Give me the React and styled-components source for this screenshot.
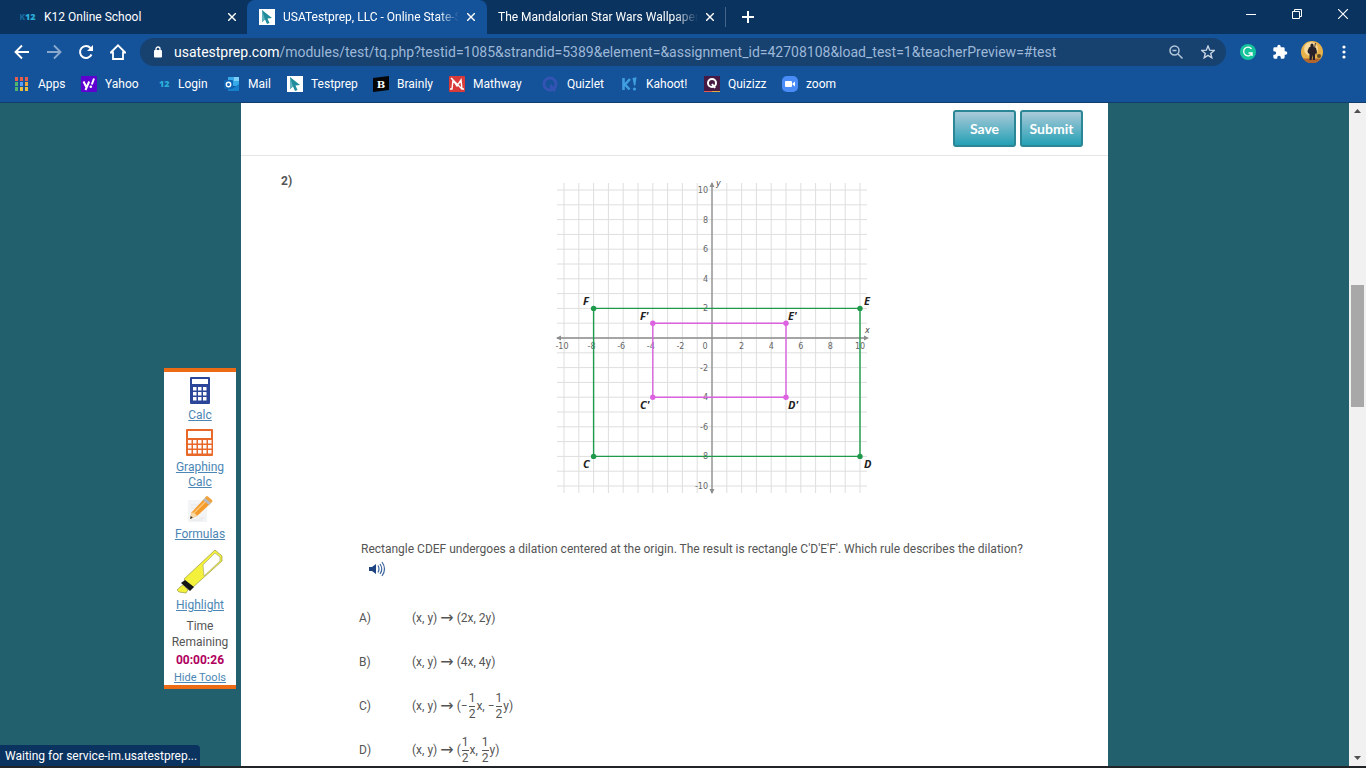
import React from "react";
import styled, { createGlobalStyle, css } from "styled-components";

const ui = 'Roboto, "Open Sans", sans-serif';

const Global = createGlobalStyle`
  *, *::before, *::after { box-sizing: border-box; }
  body { margin: 0; background: #23606d; font-family: ${ui}; }
  button { border: 0; background: none; padding: 0; font: inherit; color: inherit; }
  a { color: inherit; text-decoration: none; }
  svg { display: block; flex: none; }
`;

const Screen = styled.div`
  height: 100vh;
  display: flex;
  flex-direction: column;
  overflow: hidden;
  border-bottom: 2px solid #222528;
`;

/* browser chrome */
const TabStrip = styled.div`
  display: flex;
  height: 34px;
  background: #0b335f;
  color: #fff;
  font-size: 12px;
`;
const Tab = styled.div`
  display: flex;
  align-items: center;
  gap: 8px;
  width: 240px;
  height: 34px;
  padding: 0 9px 0 11px;
  border-radius: 8px 8px 0 0;
  ${(p) => p.$first && css`width: 247px; padding: 0 7px 0 20px;`}
  ${(p) => p.$active && css`background: #14529a; padding: 0 8px 0 12px;`}
`;
const TabTitle = styled.span`
  flex: 1;
  min-width: 0;
  overflow: hidden;
  white-space: nowrap;
  line-height: 18px;
  ${(p) => p.$fade && css`margin-right: -4px; mask-image: linear-gradient(to right, #000 88%, transparent);`}
`;
const IconButton = styled.button`
  display: flex;
  justify-content: center;
  align-items: center;
  width: ${(p) => p.$w || 16}px;
  height: ${(p) => p.$h || 16}px;
  flex: none;
  opacity: ${(p) => (p.$dim ? 0.5 : 1)};
`;
const Divider = styled.span`
  width: 1px;
  height: 20px;
  margin: 7px 11px 0 -2px;
  background: #44658a;
`;
const NewTab = styled(IconButton)`
  align-self: center;
`;
const WindowButtons = styled.div`
  display: flex;
  margin-left: auto;
  height: 28px;
`;

const Toolbar = styled.div`
  display: flex;
  align-items: center;
  gap: 16px;
  height: 36px;
  padding: 0 14px;
  background: #14529a;
  color: #fff;
`;
const AddressBar = styled.div`
  flex: 1;
  min-width: 0;
  display: flex;
  align-items: center;
  gap: 12px;
  height: 28px;
  margin: 0 -2px;
  padding: 0 8px 0 14px;
  border-radius: 14px;
  background: #17416f;
`;
const Address = styled.div`
  flex: 1;
  min-width: 0;
  overflow: hidden;
  white-space: nowrap;
  font-size: 14px;
  line-height: 20px;
  color: #9db8d8;
  b { font-weight: 400; color: #fff; }
`;

const Bookmarks = styled.nav`
  display: flex;
  height: 33px;
  padding: 0 14px 5px;
  background: #14529a;
  border-bottom: 1px solid #123c6c;
  color: #fff;
  font-size: 12px;
`;
const Bookmark = styled.a`
  display: flex;
  align-items: center;
  gap: 8px;
  width: ${(p) => p.$w}px;
  flex: none;
  white-space: nowrap;
`;

/* page */
const Viewport = styled.div`
  flex: 1;
  min-height: 0;
  display: flex;
`;
const Page = styled.div`
  flex: 1;
  min-width: 0;
  display: grid;
  grid-template-columns: 1fr minmax(0, 867px) 1fr;
  overflow: hidden;
  color: #555;
`;
const Gutter = styled.div`
  display: flex;
  justify-content: flex-end;
  align-items: flex-start;
  padding: 265px 5px 0 0;
`;
const Tools = styled.aside`
  display: flex;
  flex-direction: column;
  align-items: center;
  width: 72px;
  height: 321px;
  border-top: 4px solid #ec6b14;
  border-bottom: 4px solid #ec6b14;
  background: #fff;
  font-size: 12px;
  line-height: 16px;
  text-align: center;
`;
const Tool = styled.a`
  display: flex;
  flex-direction: column;
  align-items: center;
  gap: 4px;
  padding-top: ${(p) => p.$pad}px;
  line-height: 15px;
  color: #4b86b4;
  text-decoration: underline;
`;
const Timer = styled.div`
  padding-top: 5px;
  strong { display: block; line-height: 20px; color: #b0005e; }
`;
const HideTools = styled.a`
  font-size: 11px;
  color: #4b86b4;
  text-decoration: underline;
`;

const Sheet = styled.main`
  background: #fff;
  overflow: hidden;
`;
const Actions = styled.div`
  display: flex;
  justify-content: flex-end;
  height: 53px;
  padding: 7px 25px 0 118px;
  border-bottom: 1px solid #e3e7e8;
`;
const ActionGroup = styled.div`
  display: flex;
  gap: 4px;
`;
const ActionButton = styled.button`
  width: 63px;
  height: 37px;
  border: 2px solid #2b8795;
  border-radius: 3px;
  background: linear-gradient(#a9cad9, #25a0b5);
  color: #fff;
  font-family: Lato, sans-serif;
  font-size: 14px;
  font-weight: 700;
`;
const Question = styled.section`
  display: grid;
  grid-template-columns: 80px minmax(0, 1fr);
  padding: 14px 0 0 40px;
`;
const Number = styled.div`
  font-size: 12px;
  font-weight: 700;
  line-height: 22px;
`;
const Figure = styled.figure`
  margin: 6px 0 0 191px;
`;
const Prompt = styled.p`
  margin: 41px 0 0;
  font-size: 12px;
  line-height: 20px;
  white-space: nowrap;
`;
const Listen = styled.button`
  display: block;
  margin: 2px 0 0 7px;
`;
const Answers = styled.ol`
  list-style: none;
  margin: 19px 0 0;
  padding: 0;
`;
const Answer = styled.li`
  display: grid;
  grid-template-columns: 53px 1fr;
  align-items: center;
  height: 44px;
  margin-left: -2px;
  font-size: 12px;
  line-height: 16px;
`;
const Rule = styled.span`
  display: flex;
  align-items: center;
  white-space: pre;
`;
const To = styled.span`
  padding: 0 3px;
  font-family: "DejaVu Sans", sans-serif;
  font-size: 16px;
`;
const Fraction = styled.span`
  display: inline-flex;
  flex-direction: column;
  align-items: center;
  margin: 0 1px;
  line-height: 15px;
  span:first-child { border-bottom: 1px solid #555; }
`;

const ScrollBar = styled.div`
  display: flex;
  flex-direction: column;
  align-items: center;
  justify-content: space-between;
  width: 17px;
  padding: 6px 0;
  background: #f1f1f1;
`;
const ScrollTrack = styled.div`
  flex: 1;
  display: flex;
  flex-direction: column;
  width: 13px;
  &::before { content: ""; flex: 172; }
  &::after { content: ""; flex: 349; }
`;
const ScrollThumb = styled.div`
  flex: 122;
  background: #a8a8a8;
`;
const Status = styled.div`
  position: fixed;
  left: 0;
  bottom: 2px;
  width: 200px;
  height: 21px;
  padding-left: 5px;
  border-radius: 0 4px 0 0;
  background: #0b335f;
  color: #fff;
  font-size: 12px;
  line-height: 22px;
  white-space: nowrap;
`;

/* icons */
const Cross = ({ size = 8 }) => (
  <svg width={size} height={size} viewBox="0 0 8 8" stroke="currentColor" strokeWidth={size > 8 ? 0.9 : 1.4}><path d="M0 0 8 8M8 0 0 8" /></svg>
);
const K12 = ({ short }) => (
  <svg width="16" height="16" viewBox="0 0 16 16" fontFamily="Open Sans" fontWeight="800" fontSize="9">
    {!short && <text x="-1" y="11" fill="#17659b">K</text>}
    <text x="5" y="11" fill="#2badd8">12</text>
  </svg>
);
const Pointer = () => (
  <svg width="16" height="16" viewBox="0 0 16 16"><path fill="#fff" d="M0 0h16v16H0z" /><path fill="#218d9c" d="M3 1v12l3-2.500 2 4.500 2.500-1-2-4.500 4.500-.5z" /><path fill="#5fb3be" d="M3 1l3 9.500-3 2.500z" /></svg>
);
const AppsIcon = () => (
  <svg width="16" height="16" viewBox="0 0 16 16">
    {["#e8604c", "#e8604c", "#e8604c", "#4fb56f", "#5c9cf5", "#e9a93e", "#4fb56f", "#e9c03e", "#e9c03e"].map((c, i) => (
      <rect key={i} x={1 + (i % 3) * 5} y={1 + Math.floor(i / 3) * 5} width="3" height="4" fill={c} />
    ))}
  </svg>
);
const Yahoo = () => (
  <svg width="16" height="16" viewBox="0 0 16 16"><rect width="16" height="16" rx="1" fill="#5f01d1" /><path d="m2.500 5.500 2.800 5.500M8.200 5.500 4.500 14M13 2.500l-2.200 6" fill="none" stroke="#fff" strokeWidth="2" /><circle cx="9.800" cy="10.800" r="1.300" fill="#fff" /></svg>
);
const Brainly = () => (
  <svg width="16" height="16" viewBox="0 0 16 16"><path fill="#050505" d="M0 2 16 0v14L0 16z" /><text x="8" y="12" textAnchor="middle" fill="#fff" fontFamily="DejaVu Serif" fontWeight="700" fontSize="10">B</text></svg>
);
const Kahoot = () => (
  <svg width="17" height="16" viewBox="0 0 17 16" fill="none" stroke="#3f9fe0"><path d="M2.500 2v12M9 3 4 8.500l4.500 5" strokeWidth="2.600" /><path d="m11.500 2 4-.8-1.200 8.300h-1.300z" fill="#3f9fe0" stroke="none" /><circle cx="13.500" cy="13" r="1.600" fill="#3f9fe0" stroke="none" /></svg>
);
const QuizletIcon = () => (
  <svg width="18" height="16" viewBox="0 0 18 16" fill="none" stroke="#3454b4" strokeWidth="3"><circle cx="9" cy="8" r="6" /><path d="m9 9 5 6" /></svg>
);
const Outlook = () => (
  <svg width="16" height="16" viewBox="0 0 16 16"><path fill="#38a9e8" d="M4 1h11v9H4z" /><path fill="#7cd0f7" d="M10 1h5v4h-5z" /><path fill="#1680cc" d="M4 15V9l5 3 6-4v7z" /><rect y="4" width="9" height="9" rx="1" fill="#0f64b4" /><circle cx="4.500" cy="8.500" r="2.200" fill="none" stroke="#fff" strokeWidth="1.400" /></svg>
);
const Mathway = () => (
  <svg width="16" height="16" viewBox="0 0 16 16"><rect width="16" height="16" rx="1" fill="#d93b3b" /><path d="M1 13h2L4 4l4 6 4-6 1 9h2M2 2l11 11" fill="none" stroke="#fff" strokeWidth="1.400" /></svg>
);
const Quizizz = () => (
  <svg width="16" height="16" viewBox="0 0 16 16"><rect width="16" height="16" fill="#461a42" /><circle cx="8" cy="7" r="4" fill="none" stroke="#fff" strokeWidth="2" /><path d="M8 8l3 4" stroke="#fff" strokeWidth="2" /><path d="M0 15.500h8" stroke="#e0584f" /><path d="M8 15.500h8" stroke="#e0ad3f" /></svg>
);
const Zoom = () => (
  <svg width="16" height="16" viewBox="0 0 16 16"><rect width="16" height="16" rx="5" fill="#4a8cf7" /><rect x="3" y="5" width="7" height="6" rx="1" fill="#fff" /><path d="M10.500 7.500 13 5.500v5l-2.500-2z" fill="#fff" /></svg>
);
const Arrow = ({ flip }) => (
  <svg width="16" height="16" viewBox="0 0 16 16" fill="none" stroke="currentColor" strokeWidth="1.900">
    <path d={flip ? "M1 8h13M8 1.500 14.500 8 8 14.500" : "M15 8H2M8 1.500 1.500 8 8 14.500"} />
  </svg>
);
const Reload = () => (
  <svg width="16" height="16" viewBox="0 0 16 16"><path d="M13.500 10.500A6 6 0 1 1 12.500 4" fill="none" stroke="currentColor" strokeWidth="2" /><path d="M15 1v6H9z" fill="currentColor" /></svg>
);
const Home = () => (
  <svg width="16" height="16" viewBox="0 0 16 16"><path d="M.8 8.500 8 1.300l7.200 7.200H13V15H3V8.500z" fill="none" stroke="currentColor" strokeWidth="1.800" /></svg>
);
const Lock = () => (
  <svg width="8" height="12" viewBox="0 0 8 12"><rect y="4" width="8" height="7.500" rx="1" fill="#fff" /><path d="M2 5V3a2 2 0 0 1 4 0v2" fill="none" stroke="#fff" strokeWidth="1.300" /></svg>
);
const Magnifier = () => (
  <svg width="14" height="14" viewBox="0 0 14 14" fill="none" stroke="#b4c6da" strokeWidth="1.500"><circle cx="5.500" cy="5.500" r="4.500" /><path d="M9 9l4.500 4.500M3.500 5.500h4" /></svg>
);
const Star = () => (
  <svg width="14" height="14" viewBox="0 0 14 14" fill="none" stroke="#c7d4e3" strokeWidth="1.400"><path d="m7 1 1.700 4.200 4.500.3-3.500 2.900 1.100 4.400L7 10.400l-3.800 2.400 1.100-4.400L.8 5.500l4.500-.3z" /></svg>
);
const Grammarly = () => (
  <svg width="16" height="16" viewBox="0 0 16 16"><circle cx="8" cy="8" r="8" fill="#15c39a" /><path d="M11.500 5A4.300 4.300 0 1 0 12 9H8.500M12 9v3" fill="none" stroke="#fff" strokeWidth="1.300" /></svg>
);
const Puzzle = () => (
  <svg width="16" height="16" viewBox="0 0 24 24" fill="#fff"><path d="M20.500 11H19V7a2 2 0 0 0-2-2h-4V3.500a2.500 2.500 0 0 0-5 0V5H4a2 2 0 0 0-2 2v3.800h1.500a2.700 2.700 0 0 1 0 5.400H2V20a2 2 0 0 0 2 2h3.800v-1.500a2.700 2.700 0 0 1 5.400 0V22H17a2 2 0 0 0 2-2v-4h1.500a2.500 2.500 0 0 0 0-5z" /></svg>
);
const Avatar = () => (
  <svg width="22" height="22" viewBox="0 0 22 22"><circle cx="11" cy="11" r="11" fill="#e9b14a" /><circle cx="10" cy="8" r="7" fill="#f7d99b" /><path d="M2 17.500h18A11 11 0 0 1 2 17.500z" fill="#b0662e" /><path d="M9.500 4a1.500 1.500 0 0 1 3 0v1.500l2.500 1.500 1 4-1 3-1-2v7h-2l-.5-5-1 5H8.500V13L7 12l-.5-2L8 6.500l1.500-1z" fill="#25202a" /><path d="m14.500 2-1 5" stroke="#4b3b35" /><circle cx="18" cy="15" r="2" fill="#5b4a25" /></svg>
);
const Dots = () => (
  <svg width="4" height="14" viewBox="0 0 4 14" fill="#fff"><circle cx="2" cy="2" r="1.600" /><circle cx="2" cy="7" r="1.600" /><circle cx="2" cy="12" r="1.600" /></svg>
);
const Plus = () => (
  <svg width="12" height="12" viewBox="0 0 12 12" stroke="#fff" strokeWidth="2"><path d="M6 0v12M0 6h12" /></svg>
);
const Minimize = () => (
  <svg width="10" height="10" viewBox="0 0 10 10" stroke="#fff"><path d="M0 5.500h10" /></svg>
);
const Restore = () => (
  <svg width="10" height="10" viewBox="0 0 10 10" fill="none" stroke="#fff"><path d="M.5 2.500h7v7h-7zM2.500 2.500v-2h7v7h-2" /></svg>
);
const Caret = ({ down }) => (
  <svg width="7" height="4" viewBox="0 0 7 4" fill="#505050"><path d={down ? "M0 0h7L3.500 4z" : "M0 4h7L3.500 0z"} /></svg>
);
const Calculator = ({ color, cols, w, h }) => (
  <svg width={w} height={h} viewBox={`0 0 ${w} ${h}`}>
    <rect width={w} height={h} rx="1" fill={color} />
    <rect x="2" y="2" width={w - 4} height={cols === 3 ? 5 : 7} fill="#fff" />
    {Array.from({ length: cols * 3 }, (_, i) => (
      <rect key={i} x={(cols === 3 ? 3 : 2) + (i % cols) * 5} y={(cols === 3 ? 10 : 11) + Math.floor(i / cols) * 5} width="3.500" height="3.500" fill="#fff" />
    ))}
  </svg>
);
const Pencil = () => (
  <svg width="26" height="28" viewBox="0 0 26 28"><path d="M1 5h15l4 4v18H1z" fill="#f3f4f5" /><path d="M4 10h8M4 13h6M12 23h6M4 25h12" stroke="#e3e6ea" /><path d="M3 24l1.500-6.500L17 4l6 5L10 21z" fill="#f49b2c" /><path d="M6 19 19 6" stroke="#fbc574" strokeWidth="1.500" /><path d="m17 4 2-2.500q1-1 2 0l4 3.500q1 1 0 2L23 9z" fill="#f0a33b" /><path d="m16 5 2-2 6 5-2 2z" fill="#b7bcc6" /><path d="M3 24l1.500-6.500q4 0 5.500 3.500z" fill="#f6d9a8" /><path d="m3 24 .8-3 2 1.700z" fill="#333" /></svg>
);
const Marker = () => (
  <svg width="46" height="46" viewBox="0 0 46 46"><path d="M7 31 38 2l7 6v5L15 40z" fill="#f4f13c" stroke="#9a9a45" strokeWidth=".7" /><path d="m26 17 12-12 5 4v4L27 28z" fill="#fff" stroke="#aaa97a" strokeWidth=".7" /><path d="m4 35 4-3 9 7-4 4z" fill="#151515" /><path d="m3 39 3-2 5 5-2 3-7-1-2-2z" fill="#f4f13c" stroke="#9a9a45" strokeWidth=".7" /></svg>
);
const Speaker = () => (
  <svg width="18" height="16" viewBox="0 0 18 16"><path d="M1 6h3l4-3v10l-4-3H1z" fill="#1d4480" /><path d="M10 4.500q2 3.500 0 7M12 3q3.500 5 0 10M14 1q5 7 0 14" fill="none" stroke="#3b659d" strokeWidth="1.200" /></svg>
);

const U = 14.8;
const px = (x) => 712 + x * U;
const py = (y) => 338 - y * U;
const steps = Array.from({ length: 21 }, (_, i) => i - 10);
const ticks = [-10, -8, -6, -4, -2, 2, 4, 6, 8, 10];

const Shape = ({ pts, color }) => (
  <g fill={color}>
    <polygon points={pts.map(([x, y]) => `${px(x)},${py(y)}`).join(" ")} fill="none" stroke={color} strokeWidth="1.400" />
    {pts.map(([x, y]) => <circle key={`${x},${y}`} cx={px(x)} cy={py(y)} r="2.700" />)}
  </g>
);

const Graph = () => (
  <svg width="326" height="322" viewBox="552 176 326 322" role="img" aria-label="Rectangles CDEF and C'D'E'F' on a coordinate plane">
    <g stroke="#dedede">
      {steps.map((n) => <path key={n} d={`M${px(n)} 183V493M557 ${py(n)}H867`} />)}
    </g>
    <g stroke="#8d8d8d" strokeWidth="1.300" fill="#8d8d8d">
      <path d="M557 338H867M712 183V493" />
      <path stroke="none" d="M712 182l2.500 5h-5zM712 494l2.500-5h-5zM556 338l5-2.500v5zM869 338l-5-2.500v5z" />
    </g>
    <g fontFamily="DejaVu Sans" fontSize="8" fill="#666" textAnchor="middle">
      {ticks.map((n) => <text key={n} x={px(n) - (n < 0 ? 2 : 0)} y="349">{n}</text>)}
      <text x="705" y="349">0</text>
    </g>
    <g fontFamily="DejaVu Sans" fontSize="8" fill="#666" textAnchor="end">
      {ticks.map((n) => <text key={n} x="708" y={py(n) + 3}>{n}</text>)}
    </g>
    <Shape color="#1f9a4a" pts={[[-8, -8], [10, -8], [10, 2], [-8, 2]]} />
    <Shape color="#dc62e0" pts={[[-4, -4], [5, -4], [5, 1], [-4, 1]]} />
    <g fontFamily="DejaVu Sans" fontStyle="italic" fontSize="8" fill="#444">
      <text x="716" y="186">y</text><text x="865" y="333">x</text>
    </g>
    <g fontFamily="Open Sans" fontStyle="italic" fontWeight="700" fontSize="11" fill="#222">
      <text x="583" y="305">F</text><text x="864" y="305">E</text>
      <text x="640" y="320">F'</text><text x="788" y="320">E'</text>
      <text x="640" y="409">C'</text><text x="788" y="409">D'</text>
      <text x="583" y="468">C</text><text x="864" y="468">D</text>
    </g>
  </svg>
);

const Half = () => <Fraction><span>1</span><span>2</span></Fraction>;

const bookmarks = [
  ["Apps", 67, <AppsIcon />],
  ["Yahoo", 73, <Yahoo />],
  ["Login", 70, <K12 short />],
  ["Mail", 63, <Outlook />],
  ["Testprep", 86, <Pointer />],
  ["Brainly", 76, <Brainly />],
  ["Mathway", 92, <Mathway />],
  ["Quizlet", 80, <QuizletIcon />],
  ["Kahoot!", 83, <Kahoot />],
  ["Quizizz", 78, <Quizizz />],
  ["zoom", 60, <Zoom />],
];

export default function App() {
  return (
    <Screen>
      <Global />
      <TabStrip>
        <Tab $first><K12 /><TabTitle>K12 Online School</TabTitle><IconButton aria-label="Close tab"><Cross /></IconButton></Tab>
        <Tab $active><Pointer /><TabTitle $fade>USATestprep, LLC - Online State-S</TabTitle><IconButton aria-label="Close tab"><Cross /></IconButton></Tab>
        <Tab><TabTitle $fade>The Mandalorian Star Wars Wallpaper</TabTitle><IconButton aria-label="Close tab"><Cross /></IconButton></Tab>
        <Divider />
        <NewTab aria-label="New tab" $w={22}><Plus /></NewTab>
        <WindowButtons>
          <IconButton $w={46} $h={28} aria-label="Minimize"><Minimize /></IconButton>
          <IconButton $w={46} $h={28} aria-label="Restore"><Restore /></IconButton>
          <IconButton $w={46} $h={28} aria-label="Close"><Cross size={10} /></IconButton>
        </WindowButtons>
      </TabStrip>
      <Toolbar>
        <IconButton aria-label="Back"><Arrow /></IconButton>
        <IconButton aria-label="Forward" $dim><Arrow flip /></IconButton>
        <IconButton aria-label="Reload"><Reload /></IconButton>
        <IconButton aria-label="Home"><Home /></IconButton>
        <AddressBar>
          <Lock />
          <Address><b>usatestprep.com</b>/modules/test/tq.php?testid=1085&amp;strandid=5389&amp;element=&amp;assignment_id=42708108&amp;load_test=1&amp;teacherPreview=#test</Address>
          <IconButton $w={20} aria-label="Zoom"><Magnifier /></IconButton>
          <IconButton $w={20} aria-label="Bookmark this page"><Star /></IconButton>
        </AddressBar>
        <IconButton aria-label="Grammarly"><Grammarly /></IconButton>
        <IconButton aria-label="Extensions"><Puzzle /></IconButton>
        <IconButton aria-label="Profile"><Avatar /></IconButton>
        <IconButton aria-label="Menu"><Dots /></IconButton>
      </Toolbar>
      <Bookmarks>
        {bookmarks.map(([name, w, icon]) => <Bookmark key={name} href="#" $w={w}>{icon}{name}</Bookmark>)}
      </Bookmarks>
      <Viewport>
        <Page>
          <Gutter>
            <Tools>
              <Tool href="#" $pad={5}><Calculator color="#2b4699" cols={3} w={20} h={27} />Calc</Tool>
              <Tool href="#" $pad={6}><Calculator color="#e8682a" cols={5} w={27} h={27} /><span>Graphing<br />Calc</span></Tool>
              <Tool href="#" $pad={5}><Pencil />Formulas</Tool>
              <Tool href="#" $pad={6}><Marker />Highlight</Tool>
              <Timer>Time<br />Remaining<strong>00:00:26</strong></Timer>
              <HideTools href="#">Hide Tools</HideTools>
            </Tools>
          </Gutter>
          <Sheet>
            <Actions>
              <ActionGroup><ActionButton>Save</ActionButton><ActionButton>Submit</ActionButton></ActionGroup>
            </Actions>
            <Question>
              <Number>2)</Number>
              <div>
                <Figure><Graph /></Figure>
                <Prompt>Rectangle CDEF undergoes a dilation centered at the origin. The result is rectangle C'D'E'F'. Which rule describes the dilation?</Prompt>
                <Listen aria-label="Read aloud"><Speaker /></Listen>
                <Answers>
                  <Answer><span>A)</span><Rule>(x, y)<To>→</To>(2x, 2y)</Rule></Answer>
                  <Answer><span>B)</span><Rule>(x, y)<To>→</To>(4x, 4y)</Rule></Answer>
                  <Answer><span>C)</span><Rule>(x, y)<To>→</To>(−<Half />x, −<Half />y)</Rule></Answer>
                  <Answer><span>D)</span><Rule>(x, y)<To>→</To>(<Half />x, <Half />y)</Rule></Answer>
                </Answers>
              </div>
            </Question>
          </Sheet>
          <div />
        </Page>
        <ScrollBar>
          <Caret />
          <ScrollTrack><ScrollThumb /></ScrollTrack>
          <Caret down />
        </ScrollBar>
      </Viewport>
      <Status>Waiting for service-im.usatestprep...</Status>
    </Screen>
  );
}
